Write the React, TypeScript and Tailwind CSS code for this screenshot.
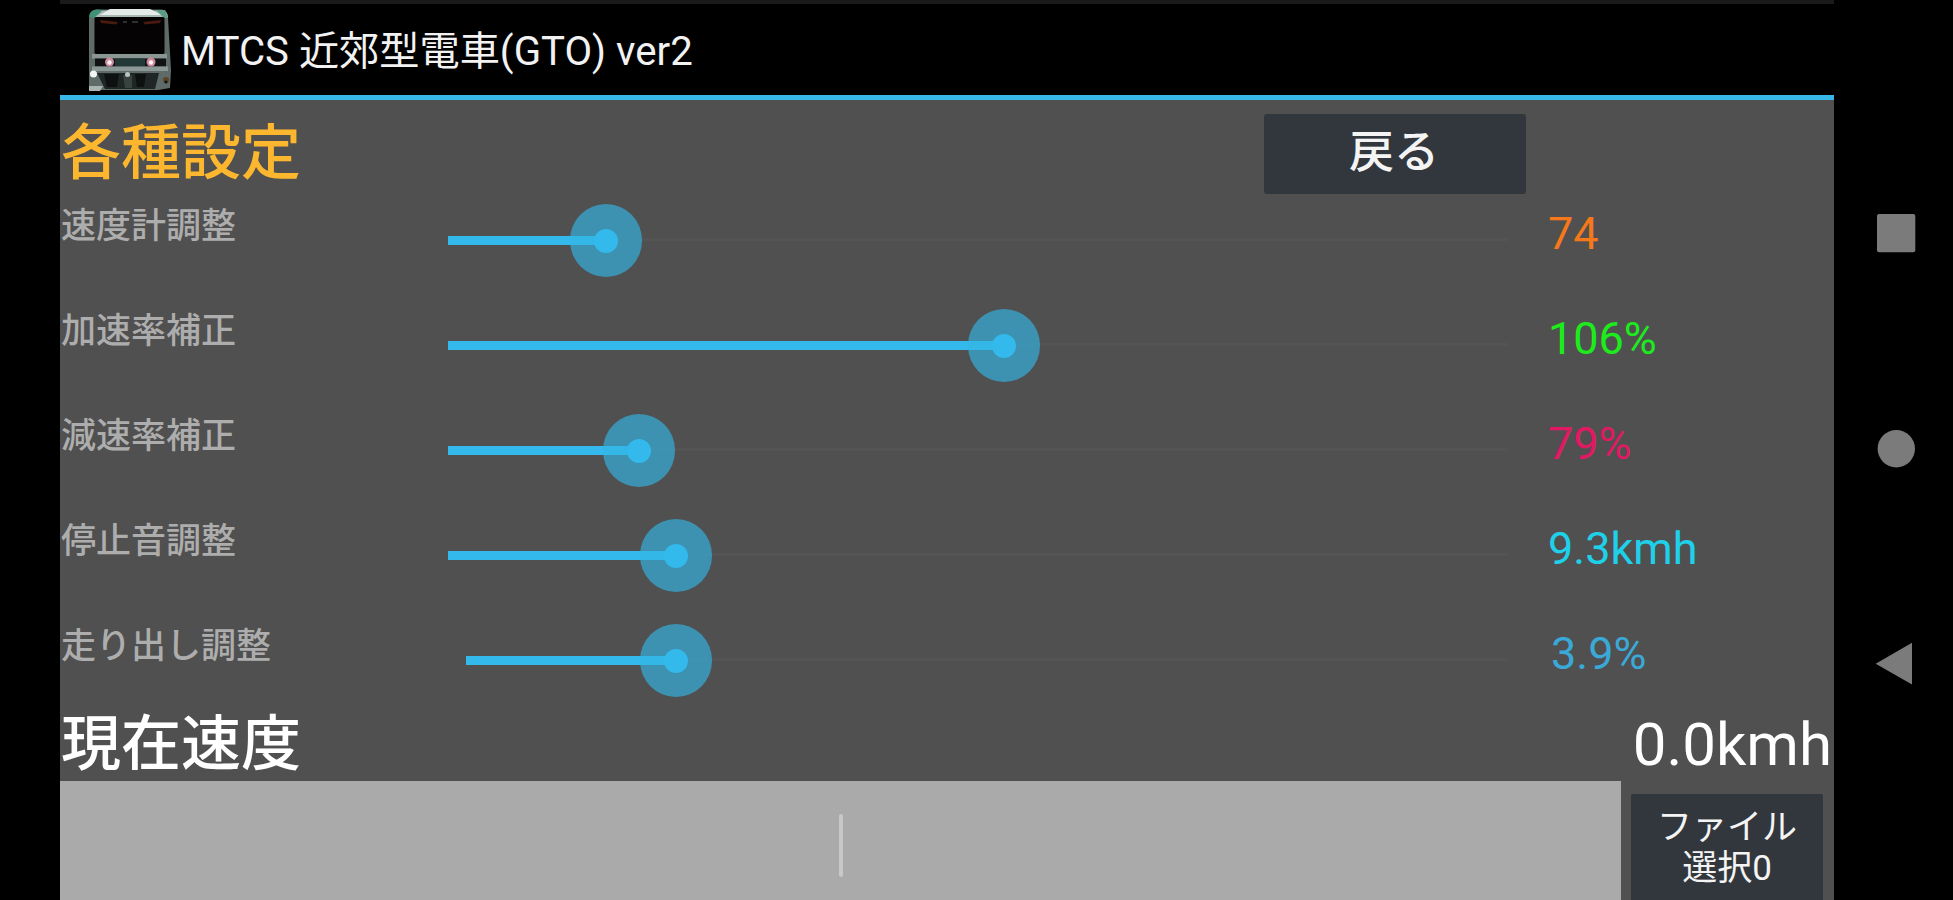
import { useState } from "react";

interface Setting {
  label: string;
  value: string;
  valueClass: string;
  // offsets in px from the left edge of the slider column
  start: number;
  thumb: number;
}

const SETTINGS: Setting[] = [
  { label: "速度計調整", value: "74", valueClass: "text-[#f5781a]", start: 0, thumb: 158 },
  { label: "加速率補正", value: "106%", valueClass: "text-[#1cec1c]", start: 0, thumb: 556 },
  { label: "減速率補正", value: "79%", valueClass: "text-[#e01a62]", start: 0, thumb: 191 },
  { label: "停止音調整", value: "9.3kmh", valueClass: "text-[#1fd0ea]", start: 0, thumb: 228 },
  { label: "走り出し調整", value: "3.9%", valueClass: "pl-[3px] text-[#3ba9d8]", start: 18, thumb: 228 },
];

function TrainIcon() {
  return (
    <svg width="84" height="84" viewBox="0 0 84 84" fill="none">
      {/* roof and body shell */}
      <path d="M1 10Q1 2 8 1.500L74 1.500Q80 2 80 10L83 62L82 80L70 82H14L1 83Z" fill="#5f6b68" />
      <path d="M2 9Q3 3 9 2.500H74Q79 3 80 9H2Z" fill="#a9b8b4" />
      <path d="M22 1H62L74 7H12Z" fill="#e4eae8" />
      <path d="M1 9Q2 2 9 1.500L15 2L6 10Z" fill="#3f9277" />
      <path d="M68 2L77 2L80 10L76 10Z" fill="#5b9b86" />
      {/* windscreen */}
      <rect x="6.500" y="9" width="70" height="37" rx="1.500" fill="#050303" />
      <path d="M12 12L30 14L28 16.500L13 15Z" fill="#4a1a10" />
      <path d="M73 12L55 14L57 16.500L72 15Z" fill="#4a1a10" />
      <path d="M35 14H39M44 14H50" stroke="#3c4244" strokeWidth="1.500" />
      {/* lights */}
      <rect x="4" y="46" width="75" height="4.500" fill="#8a9693" />
      <rect x="7" y="50.500" width="71" height="8" fill="#121214" />
      <rect x="27" y="50.500" width="30" height="8" fill="#223836" />
      <rect x="4" y="58.500" width="76" height="4.500" fill="#8b9794" />
      <ellipse cx="21.500" cy="54" rx="4.500" ry="4.500" fill="#c98a9b" />
      <circle cx="21.500" cy="54.500" r="2.200" fill="#fff0f3" />
      <ellipse cx="63" cy="54" rx="4.500" ry="4.500" fill="#c98a9b" />
      <circle cx="63" cy="54.500" r="2.200" fill="#fff0f3" />
      {/* skirt and coupler */}
      <path d="M9 65H71L67 81H17Z" fill="#1f2625" />
      <path d="M16 66H31L29 79H19Z" fill="#0d1110" />
      <path d="M47 66H58L56 79H49Z" fill="#0d1110" />
      <path d="M35 67H44V80H37Z" fill="#38423f" />
      <circle cx="39.500" cy="66.500" r="2.500" fill="#b9c3c0" />
      <circle cx="5.500" cy="66" r="3.500" fill="#f2f6f5" />
      <path d="M1 78H15L12 83H1Z" fill="#aab5b2" />
      <circle cx="78" cy="72" r="3" fill="#5d4424" />
      <circle cx="78" cy="74" r="1.500" fill="#111" />
    </svg>
  );
}

function Slider({ start, thumb }: { start: number; thumb: number }) {
  return (
    <div className="relative h-[72px] w-[1060px]">
      <div className="absolute left-[194px] top-[34px] h-[3px] w-[866px] bg-[#545454]" />
      <div
        className="absolute top-[32px] h-[9px] bg-[#33b9ec]"
        style={{ left: start, width: thumb - start }}
      />
      <div
        className="absolute top-0 flex h-[73px] w-[72px] items-center justify-center rounded-full bg-[#33b5e5]/65"
        style={{ left: thumb - 36 }}
      >
        <div className="h-[24px] w-[24px] rounded-full bg-[#33b9ec]" />
      </div>
    </div>
  );
}

function SettingRow({ setting }: { setting: Setting }) {
  return (
    <div className="flex h-[105px] items-start">
      <div className="mt-[5px] w-[388px] whitespace-nowrap pl-px text-[35px] font-medium leading-[36px] text-[#adadad]">
        {setting.label}
      </div>
      <Slider start={setting.start} thumb={setting.thumb} />
      <div className={`ml-[40px] mt-[4px] text-[45px] leading-[52px] ${setting.valueClass}`}>
        {setting.value}
      </div>
    </div>
  );
}

function NavBar() {
  return (
    <nav className="w-[119px] pl-[41px] pt-[214px]">
      <svg width="42" height="472" viewBox="0 0 42 472" fill="#7b7b7b">
        <rect x="2" y="0" width="38.300" height="38.300" rx="2" />
        <circle cx="21.300" cy="234.700" r="18.700" />
        <path d="M0.700 449.700L37 428.700V470.500Z" />
      </svg>
    </nav>
  );
}

export default function App() {
  const [settings] = useState(SETTINGS);

  return (
    <div className="flex h-[900px] w-[1953px] overflow-hidden bg-black pl-[60px] font-[Roboto,'Noto_Sans_CJK_JP',sans-serif]">
      <div className="flex w-[1774px] flex-col bg-[#505050]">
        <header className="flex h-[100px] items-start border-b-[5px] border-t-[4px] border-b-[#38b8e8] border-t-[#1a1a1a] bg-black pl-[28px] pt-[4px]">
          <TrainIcon />
          <h1 className="ml-[9px] mt-[20px] whitespace-nowrap text-[40.2px] leading-[48px] text-[#f2f2f2]">
            MTCS 近郊型電車(GTO) ver2
          </h1>
        </header>

        <div className="flex h-[104px] items-start">
          <h2 className="mt-[22px] w-[1204px] pl-px text-[60px] font-medium leading-[64px] text-[#fdb72e]">
            各種設定
          </h2>
          <button className="mt-[14px] h-[80px] w-[262px] rounded-[3px] bg-[#32373d] pb-[3px] pr-[2px] text-[45px] font-medium leading-[60px] text-[#f4f4f4]">
            戻る
          </button>
        </div>

        <main className="h-[505px]">
          {settings.map((s) => (
            <SettingRow key={s.label} setting={s} />
          ))}
        </main>

        <div className="flex h-[72px] items-center justify-between whitespace-nowrap pl-px pr-[2px] text-[60px] leading-[72px] text-white">
          <span className="font-medium">現在速度</span>
          <span>0.0kmh</span>
        </div>

        <footer className="flex flex-1">
          <div className="flex w-[1561px] items-start justify-center bg-[#aaaaaa] pl-px pt-[33px]">
            <div className="h-[63px] w-[4px] rounded-full bg-[#c8c8c8]" />
          </div>
          <button className="ml-[10px] mt-[13px] w-[192px] rounded-t-[2px] bg-[#32373d] pt-[2px] text-[35px] leading-[41px] text-[#f4f4f4]">
            ファイル
            <br />
            選択0
          </button>
        </footer>
      </div>
      <NavBar />
    </div>
  );
}
